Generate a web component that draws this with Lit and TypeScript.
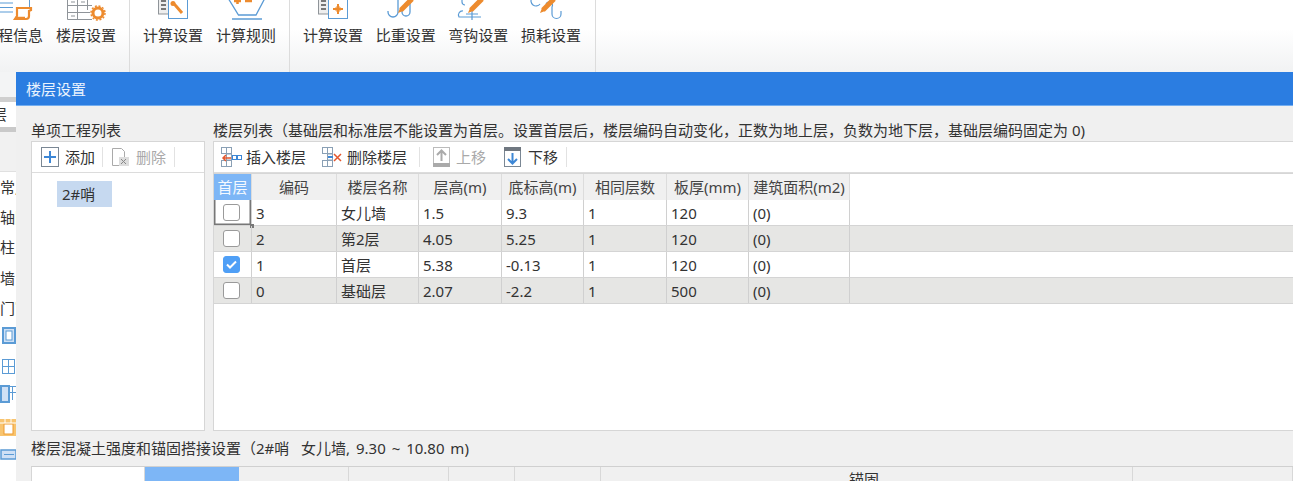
import { LitElement, html, css, svg } from "lit";
import { customElement } from "lit/decorators.js";

const B = "#5b9bd5";
const O = "#ed8b2e";
const G = "#8f9499";

const pencil = (x: number, y: number) => svg`
  <path d="M${x} ${y}L${x + 11} ${y - 11}" stroke="${O}" stroke-width="5" fill="none"/>
  <path d="M${x - 3} ${y + 3}L${x - 1} ${y - 2}L${x + 2} ${y + 1}Z" fill="${O}"/>`;

const listBox = (content: unknown) => svg`
  <rect x="15.5" y="-4" width="10" height="18" fill="#eee" stroke="${G}"/>
  <path d="M18 1h5M18 5h5M18 9h5" stroke="#777" stroke-width="2"/>
  <rect x="25.5" y="-2" width="19" height="20.5" fill="#fff" stroke="${B}"/>
  ${content}`;

const ribbonIcons = [
  svg`<path d="M17 3h13M17 7.500h13M17 12h13" stroke="${B}" stroke-width="1.200"/><path d="M46.500-1v9" stroke="${B}"/>
      <path d="M34 8h14v2l-2 1v5a3 3 0 0 1-3 3H32l2-3z" fill="none" stroke="${O}" stroke-width="2.200"/><path d="M32 18h10" stroke="${O}" stroke-width="2.500"/>`,
  svg`<path d="M11.500-2v21.500H36M11.500 5.500H36M11.500 12.500H34M21.500-2v21.500M31.500-2v12" fill="none" stroke="${G}"/>
      <path d="M15 16h4M15 2h4M25 2h4" stroke="${G}"/>
      <circle cx="42" cy="13" r="5" fill="none" stroke="${O}" stroke-width="3"/><circle cx="42" cy="13" r="7" fill="none" stroke="${O}" stroke-width="1.500" stroke-dasharray="2 1.700"/>`,
  listBox(svg`<path d="M30 3l3 3 6 7" stroke="${O}" stroke-width="3" fill="none"/><circle cx="30" cy="3.500" r="2.500" fill="${O}"/>`),
  svg`<path d="M12-2l10.500 17h17.500L49-2" fill="none" stroke="${B}" stroke-width="1.300"/><path d="M16 19h30" stroke="${B}" stroke-width="1.500"/>
      <path d="M18 1h7M21.500-3v7M29 1h7" stroke="${O}" stroke-width="2.500"/>`,
  listBox(svg`<path d="M30 9h10M35 4v10" stroke="${O}" stroke-width="2"/><circle cx="35" cy="9" r="2.500" fill="none" stroke="${O}"/>`),
  svg`<path d="M22-2v14a5 5 0 0 1-10 0v-1M34-2v14a4 4 0 0 1-8 0v-1" fill="none" stroke="${B}" stroke-width="1.300"/>${pencil(25, 10)}`,
  svg`<path d="M14 0v2a3 3 0 0 0 3 3M15 11a4 4 0 0 0-4 6h22M24 10v10M18 14h12" fill="none" stroke="${B}" stroke-width="1.200"/>${pencil(23, 10)}`,
  svg`<path d="M11-2a4 4 0 0 0 8 6M25 4a3 3 0 0 1 6 3v7a4 4 0 0 0 9 0v-3" fill="none" stroke="${B}" stroke-width="1.200"/>${pencil(22, 10)}`,
];

const squares = svg`
  <g fill="#fff" stroke="#8aa0b5">
    <rect x="0.500" y="0.500" width="5" height="6"/><rect x="0.500" y="13.500" width="5" height="6"/><rect x="5.500" y="0.500" width="5" height="6"/>
    <rect x="5.500" y="13.500" width="5" height="6"/><rect x="5.500" y="7" width="5" height="6"/>
  </g>`;

const STRIP_TEXT = ["常用", "轴网", "柱", "墙", "门窗"];
const ROWS = [
  ["3", "女儿墙", "1.5", "9.3", "1", "120", "(0)"],
  ["2", "第2层", "4.05", "5.25", "1", "120", "(0)"],
  ["1", "首层", "5.38", "-0.13", "1", "120", "(0)"],
  ["0", "基础层", "2.07", "-2.2", "1", "500", "(0)"],
];
const HEAD = ["编码", "楼层名称", "层高(m)", "底标高(m)", "相同层数", "板厚(mm)", "建筑面积(m2)"];

@customElement("app-root")
export class AppRoot extends LitElement {
  static styles = css`
    :host {
      display: block;
      position: relative;
      width: 1293px;
      height: 481px;
      overflow: hidden;
      background: #fff;
      font: 15px/20px "Noto Sans", "Noto Sans CJK SC", sans-serif;
      color: #333;
    }
    svg { display: block; overflow: hidden; flex: none; }
    .ribbon {
      display: flex;
      height: 72px;
      margin-left: -30px;
      width: 1323px;
      background: linear-gradient(#fff, #fff 40%, #f1f2f3);
    }
    .group {
      display: flex;
      gap: 13px;
      padding: 0 13px;
      border-right: 1px solid #dcdcdc;
    }
    .group.tight { gap: 12.670px; padding-right: 14px; }
    .item { width: 60px; display: flex; flex-direction: column; }
    .item svg { margin-bottom: 4px; }
    .item span { white-space: nowrap; line-height: 20px; }
    .strip { width: 16px; height: 409px; overflow: hidden; background: #fff; }
    .strip-top { height: 25px; background: #f3f4f5; border-bottom: 5px solid #cfcfcf; }
    .strip-tab { height: 25px; line-height: 25px; background: #fff; text-indent: -8px; overflow: hidden; }
    .strip-gap { border-top: 5px solid #c9c9c9; background: #f1f1f1; border-bottom: 1px solid #e0e0e0; box-sizing: border-box; height: 44.500px; }
    .strip-row { height: 30.400px; line-height: 30px; white-space: nowrap; }
    .strip-icons { display: flex; flex-direction: column; }
    .dialog {
      position: absolute;
      left: 16px;
      top: 72px;
      right: 0;
      bottom: 0;
      background: #f0f0f0;
      display: flex;
      flex-direction: column;
    }
    .title {
      height: 33px;
      line-height: 34px;
      flex: none;
      padding-left: 10px;
      background: #2b7de1;
      border-bottom: 1px solid #74aef0;
      color: #e9f2fd;
    }
    .body { flex: 1; min-height: 0; padding: 13px 0 0 15px; display: flex; flex-direction: column; }
    .top { display: grid; grid-template-columns: 174px 1fr; column-gap: 8px; height: 312px; flex: none; }
    .col { display: flex; flex-direction: column; min-width: 0; }
    .label { height: 22px; line-height: 22px; white-space: nowrap; }
    .panel { flex: 1; background: #fff; border: 1px solid #d6d6d6; border-right: none; display: flex; flex-direction: column; min-height: 0; }
    .panel.left { border-right: 1px solid #d6d6d6; }
    .tools {
      height: 30px;
      display: flex;
      align-items: center;
      flex: none;
      border-bottom: 1px solid #dcdcdc;
      white-space: nowrap;
    }
    .left .tools { padding-left: 9px; }
    .main .tools { padding-left: 7px; }
    .tool { display: flex; align-items: center; gap: 6px; }
    .tool.off { color: #a9a9a9; }
    .sep { width: 1px; height: 20px; background: #e2e2e2; }
    .sep-a { margin: 0 8px 0 7px; }
    .sep-b { margin-left: 8px; }
    .sep-c { margin: 0 13px 0 12px; }
    .t-insert { gap: 3px; }
    .t-delete { gap: 5px; margin-left: 16px; }
    .t-up { gap: 6px; }
    .t-down { gap: 7px; margin-left: 18px; }
    .project { padding: 8px 0 0 25px; }
    .project span { display: block; width: 55px; height: 26px; line-height: 26px; background: #c6d9f0; padding-left: 5px; box-sizing: border-box; }
    .grid { border-top: 1px solid #d6d6d6; }
    .tr {
      display: grid;
      grid-template-columns: 38px 85px 82px 83px 82px 83px 82px 101px;
      height: 25px;
      border-bottom: 1px solid #d4d4d4;
    }
    .tr.head { height: 26px; background: #f0f0f0; border-bottom: none; width: 636px; }
    .tr.even { background: #e6e6e4; }
    .td { padding-left: 4px; line-height: 27px; border-right: 1px solid #d0d0d0; white-space: nowrap; overflow: hidden; }
    .head .td { padding: 0; text-align: center; line-height: 26px; color: #444; border-right-color: #dcdcdc; }
    .head .first { background: #7db6f6; color: #f4f9ff; }
    .check { padding: 0; display: flex; align-items: center; justify-content: center; position: relative; overflow: visible; padding-right: 2px; }
    .box { width: 17px; height: 17px; box-sizing: border-box; border: 1px solid #9a9a9a; border-radius: 3px; background: #fff; }
    .box.on { background: #4f9ff6; border-color: #4f9ff6; display: flex; align-items: center; justify-content: center; }
    .active { box-shadow: inset 1.500px -1.500px 0 #777, inset -1.500px 0 0 #777; }
    .handle { position: absolute; right: -3px; bottom: -3px; width: 4px; height: 4px; background: #777; }
    .sub { height: 35px; line-height: 35px; flex: none; white-space: nowrap; word-spacing: 2px; }
    .bottom {
      flex: none;
      height: 30px;
      display: grid;
      grid-template-columns: 113px 94px 110px 100px 66px 86px 532px 1fr;
      border-top: 1px solid #d0d0d0;
      border-left: 1px solid #d6d6d6;
      background: #f0f0f0;
    }
    .bottom div { border-right: 1px solid #d8d8d8; text-align: center; line-height: 24px; }
    .bottom .blank { background: #fff; }
    .bottom .sel { background: #7db6f6; border-right: none; }
    .bottom .anchor { padding-right: 5px; }
  `;

  private ribbon() {
    const item = (i: number, label: string) => html`
      <div class="item">
        <svg width="60" height="21" viewBox="0 0 60 21">${ribbonIcons[i]}</svg>
        <span>${label}</span>
      </div>`;
    return html`<div class="ribbon">
      <div class="group">${item(0, "工程信息")}${item(1, "楼层设置")}</div>
      <div class="group">${item(2, "计算设置")}${item(3, "计算规则")}</div>
      <div class="group tight">${item(4, "计算设置")}${item(5, "比重设置")}${item(6, "弯钩设置")}${item(7, "损耗设置")}</div>
    </div>`;
  }

  private strip() {
    return html`<div class="strip">
      <div class="strip-top"></div>
      <div class="strip-tab">层</div>
      <div class="strip-gap"></div>
      ${STRIP_TEXT.map((t) => html`<div class="strip-row">${t}</div>`)}
      <div class="strip-icons">
        <svg width="16" height="29" viewBox="0 0 16 29"><rect x="3" y="5" width="12" height="15" fill="#cfe0f5" stroke="#5b9bd5" stroke-width="2"/><rect x="6" y="8" width="6" height="9" fill="#fff" stroke="#5b9bd5"/></svg>
        <svg width="16" height="30" viewBox="0 0 16 30"><rect x="2.500" y="7.500" width="12" height="14" fill="#fff" stroke="#5b9bd5"/><path d="M2 14.500h13M8.500 7v15" stroke="#5b9bd5"/></svg>
        <svg width="16" height="30" viewBox="0 0 16 30"><rect x="1" y="4" width="8" height="16" fill="#cfe0f5" stroke="#5b9bd5" stroke-width="2"/><path d="M9 4.500h8M12.500 4v14M9 10.500h8" stroke="#5b9bd5" fill="none"/></svg>
        <svg width="16" height="30" viewBox="0 0 16 30"><rect x="0" y="7" width="16" height="17" fill="#f8c46f"/><rect x="4" y="12" width="9" height="10" fill="#fff" stroke="#ed9a2e"/><path d="M0 11h16M5 7v4M11 7v4" stroke="#fff"/></svg>
        <svg width="16" height="30" viewBox="0 0 16 30"><rect x="1" y="8" width="15" height="9" fill="#cfe0f5" stroke="#5b9bd5" stroke-width="1.500"/><path d="M4 12.500h10" stroke="#5b9bd5"/></svg>
      </div>
    </div>`;
  }

  private leftPanel() {
    return html`<div class="col">
      <div class="label">单项工程列表</div>
      <div class="panel left">
        <div class="tools">
          <div class="tool">
            <svg width="18" height="20" viewBox="0 0 18 20"><rect x="0.500" y="0.500" width="17" height="19" fill="#fff" stroke="#7a8794"/><path d="M9 4v12M3 10h12" stroke="#3d87d6" stroke-width="2"/></svg>
            <span>添加</span>
          </div>
          <div class="sep sep-a"></div>
          <div class="tool off">
            <svg width="19" height="20" viewBox="0 0 19 20"><path d="M1.500 1.500h9l3 3v14h-12z" fill="#fff" stroke="#aaa"/><path d="M8 10h10v9H8z" fill="#ddd"/><path d="M10 12l5 5M15 12l-5 5" stroke="#888"/></svg>
            <span>删除</span>
          </div>
          <div class="sep sep-b"></div>
        </div>
        <div class="project"><span>2#哨</span></div>
      </div>
    </div>`;
  }

  private mainPanel() {
    return html`<div class="col">
      <div class="label">楼层列表（基础层和标准层不能设置为首层。设置首层后，楼层编码自动变化，正数为地上层，负数为地下层，基础层编码固定为 0)</div>
      <div class="panel main">
        <div class="tools">
          <div class="tool t-insert">
            <svg width="22" height="20" viewBox="0 0 22 20">${squares}<path d="M10 11H2M5 8l-3 3 3 3" fill="none" stroke="#e4572e" stroke-width="1.500"/><rect x="11.500" y="8.500" width="4" height="4" fill="#fff" stroke="#3d87d6"/><rect x="16.500" y="8.500" width="4" height="4" fill="#fff" stroke="#3d87d6"/></svg>
            <span>插入楼层</span>
          </div>
          <div class="tool t-delete">
            <svg width="20" height="20" viewBox="0 0 20 20">${squares}<path d="M12 7l7 7M19 7l-7 7" stroke="#e4572e" stroke-width="1.500"/><path d="M6 10h5" stroke="#3d87d6" stroke-width="2"/></svg>
            <span>删除楼层</span>
          </div>
          <div class="sep sep-c"></div>
          <div class="tool off t-up">
            <svg width="17" height="20" viewBox="0 0 17 20"><rect x="0.500" y="0.500" width="16" height="19" fill="#fff" stroke="#bbb"/><rect x="0" y="16" width="17" height="4" fill="#aaa"/><path d="M8.500 14V4M4 8l4.500-4.500L13 8" fill="none" stroke="#aaa" stroke-width="2"/></svg>
            <span>上移</span>
          </div>
          <div class="tool t-down">
            <svg width="17" height="20" viewBox="0 0 17 20"><rect x="0.500" y="0.500" width="16" height="19" fill="#fff" stroke="#7a8794"/><rect x="0" y="0" width="17" height="4" fill="#6f7780"/><path d="M8.500 6v10M4 12l4.500 4.500L13 12" fill="none" stroke="#3d87d6" stroke-width="2"/></svg>
            <span>下移</span>
          </div>
          <div class="sep sep-b"></div>
        </div>
        <div class="grid">
          <div class="tr head">
            <div class="td first">首层</div>
            ${HEAD.map((h) => html`<div class="td">${h}</div>`)}
          </div>
          ${ROWS.map(
            (r, i) => html`<div class="tr ${i % 2 ? "even" : ""}">
              <div class="td check ${i === 0 ? "active" : ""}">
                <div class="box ${i === 2 ? "on" : ""}">
                  ${i === 2
                    ? html`<svg width="11" height="9" viewBox="0 0 11 9"><path d="M1 4.500l3 3 6-6" fill="none" stroke="#fff" stroke-width="2"/></svg>`
                    : ""}
                </div>
                ${i === 0 ? html`<div class="handle"></div>` : ""}
              </div>
              ${r.map((c) => html`<div class="td">${c}</div>`)}
            </div>`
          )}
        </div>
      </div>
    </div>`;
  }

  render() {
    return html`
      ${this.ribbon()}
      ${this.strip()}
      <div class="dialog">
        <div class="title">楼层设置</div>
        <div class="body">
          <div class="top">${this.leftPanel()}${this.mainPanel()}</div>
          <div class="sub">楼层混凝土强度和锚固搭接设置（2#哨&nbsp;&nbsp;女儿墙, 9.30 ~ 10.80 m)</div>
          <div class="bottom">
            <div class="blank"></div>
            <div class="sel"></div>
            <div></div><div></div><div></div><div></div>
            <div class="anchor">锚固</div>
            <div></div>
          </div>
        </div>
      </div>
    `;
  }
}
